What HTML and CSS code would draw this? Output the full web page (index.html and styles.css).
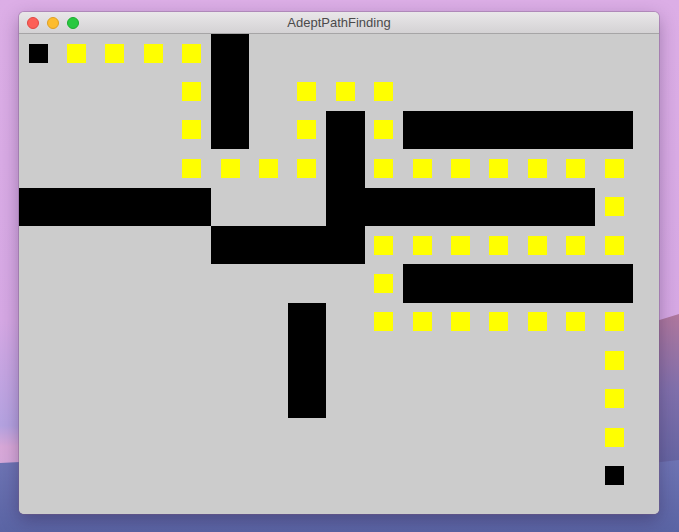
FILE: index.html
```html
<!DOCTYPE html>
<html>
<head>
<meta charset="utf-8">
<link rel="stylesheet" href="styles.css">
</head>
<body>
<div class="desktop">
  <svg class="wallpaper" width="679" height="532" viewBox="0 0 679 532">
    <defs>
      <linearGradient id="sky" x1="0" y1="0" x2="0" y2="1">
        <stop offset="0" stop-color="#dcaee6"/>
        <stop offset="0.6" stop-color="#d6a8e4"/>
        <stop offset="0.8" stop-color="#b4a2e0"/>
        <stop offset="0.84" stop-color="#d8a8d8"/>
        <stop offset="1" stop-color="#c8a6e0"/>
      </linearGradient>
      <linearGradient id="mtn" x1="0" y1="0" x2="0" y2="1">
        <stop offset="0" stop-color="#b0789e"/>
        <stop offset="0.35" stop-color="#8070ac"/>
        <stop offset="1" stop-color="#4c5a98"/>
      </linearGradient>
      <linearGradient id="hill" x1="0" y1="0" x2="0" y2="1">
        <stop offset="0" stop-color="#6e74b4"/>
        <stop offset="1" stop-color="#5a64a4"/>
      </linearGradient>
    </defs>
    <rect width="679" height="532" fill="url(#sky)"/>
    <path d="M600 345 L640 326 L679 314 L679 532 L600 532 Z" fill="url(#mtn)"/>
    <path d="M0 463 L40 461 L120 470 L300 490 L500 480 L679 460 L679 532 L0 532 Z" fill="url(#hill)"/>
  </svg>
  <div class="window">
    <div class="titlebar">
      <div class="lights">
        <span class="light red"></span>
        <span class="light yellow"></span>
        <span class="light green"></span>
      </div>
      <div class="title">AdeptPathFinding</div>
    </div>
    <div class="content">
      <div class="grid">
        <i class="s"></i><i class="p"></i><i class="p"></i><i class="p"></i><i class="p"></i><i class="w"></i><i></i><i></i><i></i><i></i><i></i><i></i><i></i><i></i><i></i><i></i>
        <i></i><i></i><i></i><i></i><i class="p"></i><i class="w"></i><i></i><i class="p"></i><i class="p"></i><i class="p"></i><i></i><i></i><i></i><i></i><i></i><i></i>
        <i></i><i></i><i></i><i></i><i class="p"></i><i class="w"></i><i></i><i class="p"></i><i class="w"></i><i class="p"></i><i class="w"></i><i class="w"></i><i class="w"></i><i class="w"></i><i class="w"></i><i class="w"></i>
        <i></i><i></i><i></i><i></i><i class="p"></i><i class="p"></i><i class="p"></i><i class="p"></i><i class="w"></i><i class="p"></i><i class="p"></i><i class="p"></i><i class="p"></i><i class="p"></i><i class="p"></i><i class="p"></i>
        <i class="w"></i><i class="w"></i><i class="w"></i><i class="w"></i><i class="w"></i><i></i><i></i><i></i><i class="w"></i><i class="w"></i><i class="w"></i><i class="w"></i><i class="w"></i><i class="w"></i><i class="w"></i><i class="p"></i>
        <i></i><i></i><i></i><i></i><i></i><i class="w"></i><i class="w"></i><i class="w"></i><i class="w"></i><i class="p"></i><i class="p"></i><i class="p"></i><i class="p"></i><i class="p"></i><i class="p"></i><i class="p"></i>
        <i></i><i></i><i></i><i></i><i></i><i></i><i></i><i></i><i></i><i class="p"></i><i class="w"></i><i class="w"></i><i class="w"></i><i class="w"></i><i class="w"></i><i class="w"></i>
        <i></i><i></i><i></i><i></i><i></i><i></i><i></i><i class="w"></i><i></i><i class="p"></i><i class="p"></i><i class="p"></i><i class="p"></i><i class="p"></i><i class="p"></i><i class="p"></i>
        <i></i><i></i><i></i><i></i><i></i><i></i><i></i><i class="w"></i><i></i><i></i><i></i><i></i><i></i><i></i><i></i><i class="p"></i>
        <i></i><i></i><i></i><i></i><i></i><i></i><i></i><i class="w"></i><i></i><i></i><i></i><i></i><i></i><i></i><i></i><i class="p"></i>
        <i></i><i></i><i></i><i></i><i></i><i></i><i></i><i></i><i></i><i></i><i></i><i></i><i></i><i></i><i></i><i class="p"></i>
        <i></i><i></i><i></i><i></i><i></i><i></i><i></i><i></i><i></i><i></i><i></i><i></i><i></i><i></i><i></i><i class="s"></i>
      </div>
    </div>
  </div>
</div>
</body>
</html>
```
FILE: styles.css
```css
html, body {
  margin: 0;
  padding: 0;
}
body {
  width: 679px;
  height: 532px;
  overflow: hidden;
  font-family: "Liberation Sans", "DejaVu Sans", sans-serif;
}
.desktop {
  position: relative;
  width: 679px;
  height: 532px;
  padding: 12px 0 0 19px;
  box-sizing: border-box;
}
.wallpaper {
  position: absolute;
  left: 0;
  top: 0;
  z-index: 0;
}
.window {
  position: relative;
  z-index: 1;
  width: 640px;
  height: 502px;
  border-radius: 5px;
  overflow: hidden;
  background: #cccccc;
  box-shadow: 0 0 0 1px rgba(120, 90, 130, 0.35), 0 6px 18px rgba(40, 20, 60, 0.35);
  display: flex;
  flex-direction: column;
}
.titlebar {
  height: 21px;
  flex: none;
  background: linear-gradient(#e9e7e9, #d4d2d4);
  border-bottom: 1px solid #a6a5a6;
  display: flex;
  align-items: center;
  position: relative;
}
.lights {
  display: flex;
  gap: 8px;
  padding-left: 8px;
}
.light {
  width: 12px;
  height: 12px;
  border-radius: 50%;
  box-sizing: border-box;
}
.light.red { background: #fc5f57; border: 1px solid #df4744; }
.light.yellow { background: #fdbc2e; border: 1px solid #de9f23; }
.light.green { background: #28c840; border: 1px solid #1dab2f; }
.title {
  position: absolute;
  left: 0;
  right: 0;
  top: 0;
  bottom: 0;
  display: flex;
  align-items: center;
  justify-content: center;
  font-size: 13px;
  color: #4b4a4b;
}
.content {
  flex: 1;
  background: #cccccc;
}
.grid {
  display: grid;
  grid-template-columns: repeat(16, 38.4px);
  grid-template-rows: repeat(12, 38.4px);
}
.grid i {
  display: flex;
  align-items: center;
  justify-content: center;
}
.grid i.w {
  background: #000000;
}
.grid i.p::before,
.grid i.s::before {
  content: "";
  width: 19px;
  height: 19px;
}
.grid i.p::before {
  background: #ffff00;
}
.grid i.s::before {
  background: #000000;
}
```
